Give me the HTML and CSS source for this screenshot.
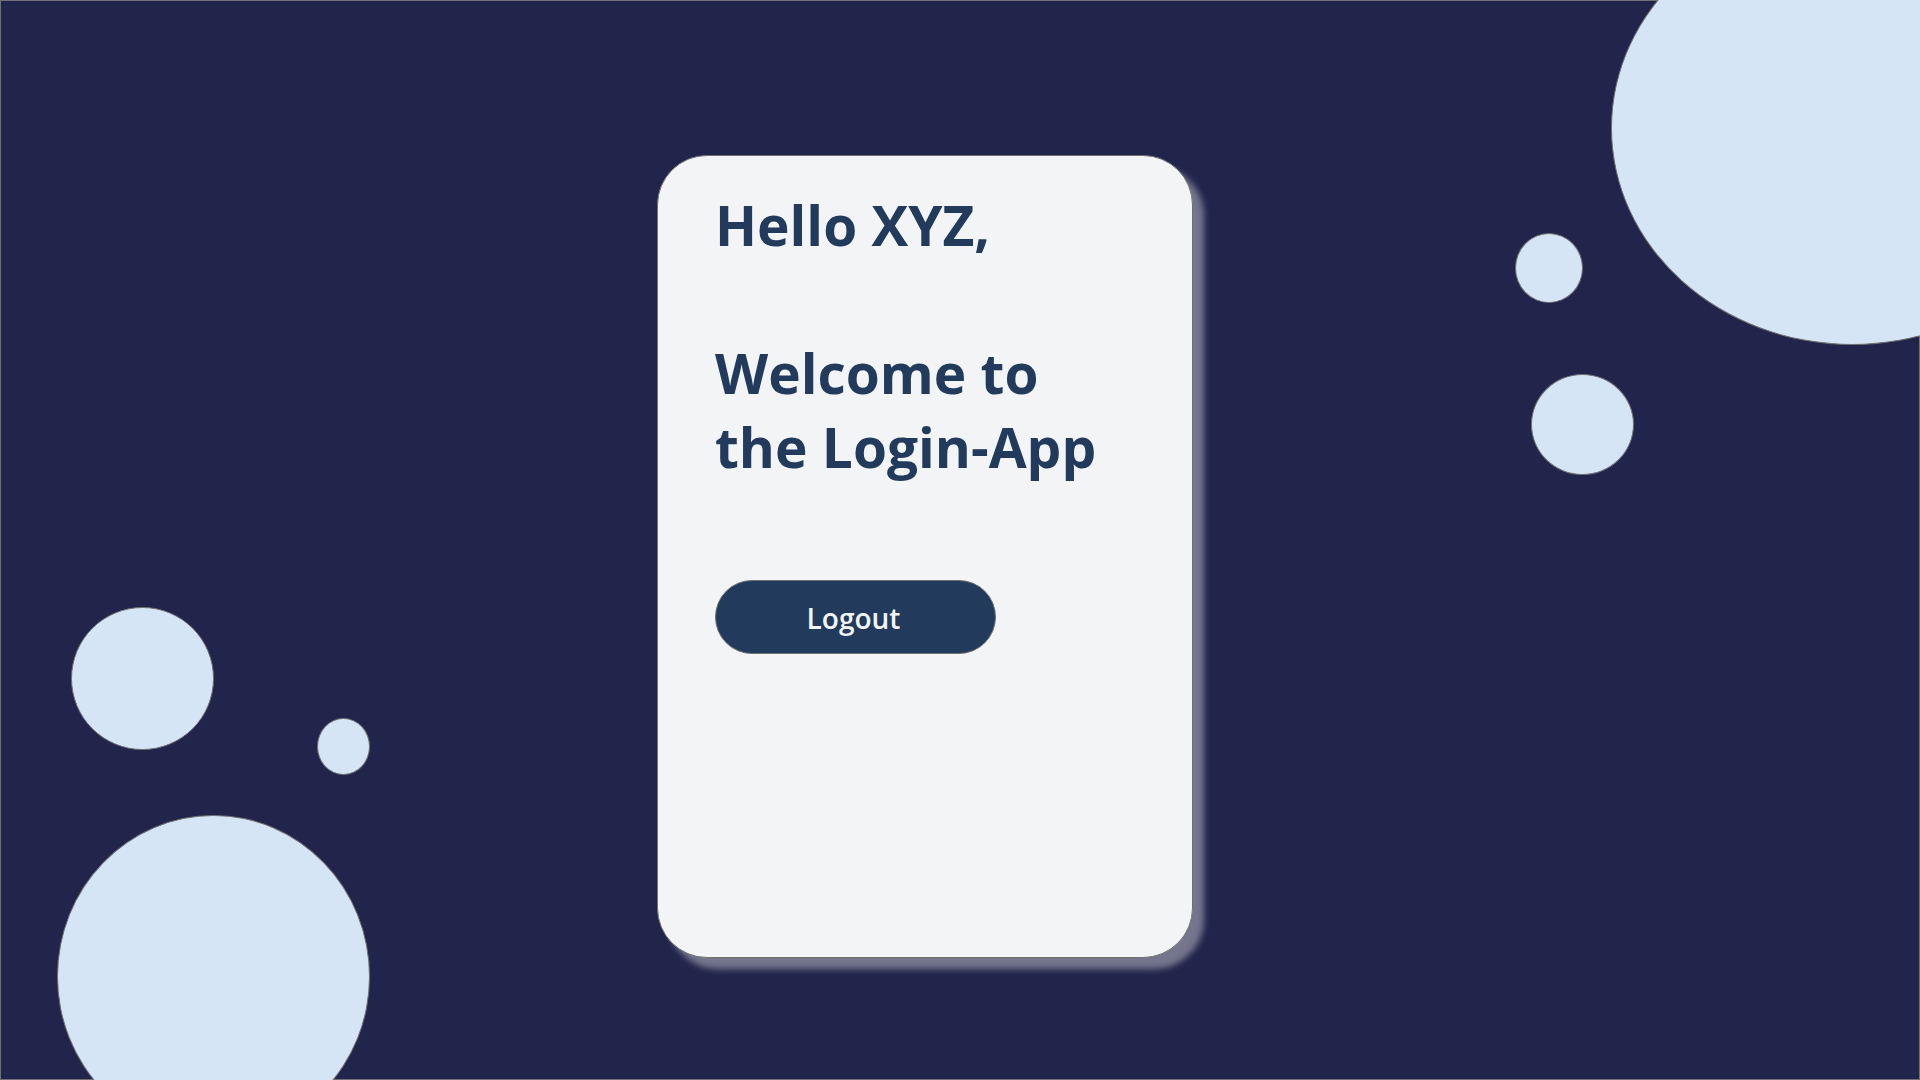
FILE: index.html
```html
<!DOCTYPE html>
<html lang="en">
<head>
  <meta charset="utf-8">
  <meta name="viewport" content="width=device-width, initial-scale=1">
  <title>Login-App</title>
  <link rel="stylesheet" href="styles.css">
</head>
<body>
  <div class="page">
    <div class="bubbles" aria-hidden="true">
      <span class="bubble bubble-top-large"></span>
      <span class="bubble bubble-top-small"></span>
      <span class="bubble bubble-top-medium"></span>
      <span class="bubble bubble-bottom-medium"></span>
      <span class="bubble bubble-bottom-small"></span>
      <span class="bubble bubble-bottom-large"></span>
    </div>
    <main class="card">
      <h1 class="greeting">Hello XYZ,</h1>
      <p class="welcome">Welcome to<br>the Login-App</p>
      <button class="logout" type="button">Logout</button>
    </main>
  </div>
</body>
</html>
```

FILE: styles.css
```css
:root {
  --night: #22254b;
  --sky: #d5e5f5;
  --navy: #223b5d;
  --paper: #f2f4f6;
  --line: #707070;
}

* {
  box-sizing: border-box;
}

body {
  margin: 0;
  font-family: "Segoe UI", "Open Sans", "Noto Sans", sans-serif;
  color: var(--navy);
}

.page {
  position: relative;
  display: flex;
  justify-content: center;
  align-items: flex-start;
  min-height: 100vh;
  padding: 155px 70px 120px 0;
  overflow: hidden;
  background: var(--night);
  box-shadow: inset 0 0 0 1px var(--line);
}

/* Decorative bubbles, anchored to the page corners */
.bubbles {
  position: absolute;
  inset: 0;
}

.bubble {
  position: absolute;
  border: 1px solid var(--line);
  border-radius: 50%;
  background: var(--sky);
}

.bubble-top-large {
  top: -89px;
  right: -174px;
  width: 483px;
  height: 434px;
}

.bubble-top-small {
  top: 233px;
  right: 337px;
  width: 68px;
  height: 70px;
}

.bubble-top-medium {
  top: 374px;
  right: 286px;
  width: 103px;
  height: 101px;
}

.bubble-bottom-medium {
  bottom: 330px;
  left: 71px;
  width: 143px;
  height: 143px;
}

.bubble-bottom-small {
  bottom: 305px;
  left: 317px;
  width: 53px;
  height: 57px;
}

.bubble-bottom-large {
  bottom: -58px;
  left: 57px;
  width: 313px;
  height: 323px;
}

.card {
  position: relative;
  display: flex;
  flex-direction: column;
  align-items: flex-start;
  width: 100%;
  max-width: 536px;
  min-height: 803px;
  padding: 32px 57px;
  border: 1px solid var(--line);
  border-radius: 50px;
  background: var(--paper);
  box-shadow: 11px 11px 6px rgba(242, 239, 239, 0.4);
}

.greeting,
.welcome {
  margin: 0;
  font-size: 55px;
  font-weight: 700;
  line-height: 74px;
}

.welcome {
  margin-top: 74px;
}

.logout {
  width: 281px;
  height: 74px;
  margin-top: 96px;
  padding: 2px 4px 0 0;
  border: 1px solid var(--line);
  border-radius: 37px;
  background: var(--navy);
  color: var(--paper);
  font-family: inherit;
  font-size: 28px;
  font-weight: 600;
  cursor: pointer;
}
```
